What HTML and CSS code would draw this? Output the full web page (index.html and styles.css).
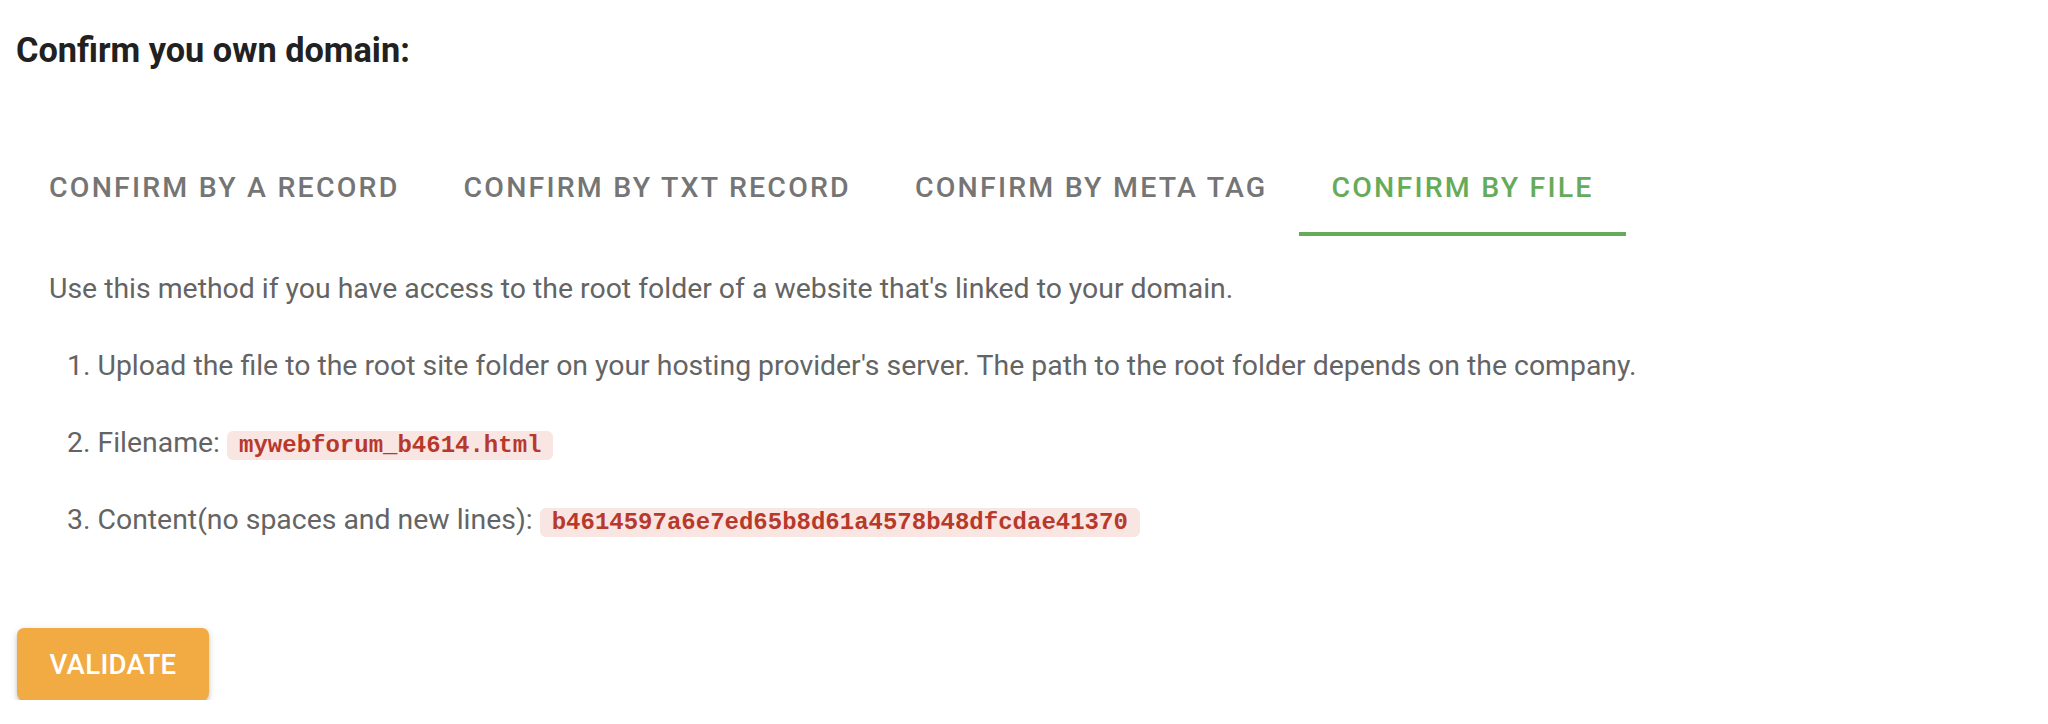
FILE: index.html
```html
<!DOCTYPE html>
<html lang="en">
<head>
<meta charset="utf-8">
<title>Confirm domain</title>
<link rel="stylesheet" href="styles.css">
</head>
<body>
<div class="page">
  <h2 class="title">Confirm you own domain:</h2>
  <div class="tabs">
    <div class="tab">Confirm by A record</div>
    <div class="tab">Confirm by TXT record</div>
    <div class="tab">Confirm by meta tag</div>
    <div class="tab active">Confirm by file</div>
  </div>
  <div class="panel">
    <p class="intro">Use this method if you have access to the root folder of a website that's linked to your domain.</p>
    <ol class="steps">
      <li>Upload the file to the root site folder on your hosting provider's server. The path to the root folder depends on the company.</li>
      <li>Filename: <code class="chip">mywebforum_b4614.html</code></li>
      <li>Content(no spaces and new lines): <code class="chip">b4614597a6e7ed65b8d61a4578b48dfcdae41370</code></li>
    </ol>
  </div>
  <button class="validate">Validate</button>
</div>
</body>
</html>
```

FILE: styles.css
```css
html, body {
  margin: 0;
  padding: 0;
  background: #ffffff;
}

body {
  font-family: Roboto, "Liberation Sans", sans-serif;
}

.page {
  padding: 29px 16px 0 16px;
  display: flex;
  flex-direction: column;
  align-items: flex-start;
}

.title {
  margin: 0;
  font-size: 34.3px;
  line-height: 42px;
  font-weight: 700;
  color: #212121;
}

.tabs {
  display: flex;
  margin-top: 68px;
  margin-left: 1px;
}

.tab {
  height: 89px;
  padding: 4px 32px 0 32px;
  border-bottom: 4px solid transparent;
  display: flex;
  align-items: center;
  font-size: 28.5px;
  font-weight: 500;
  letter-spacing: 2.2px;
  text-transform: uppercase;
  color: #757575;
  white-space: nowrap;
}

.tab.active {
  color: #66ab59;
  border-bottom-color: #66ab59;
}

.panel {
  padding-left: 33px;
  color: #646464;
  font-size: 28.4px;
  line-height: 39px;
}

.intro {
  margin: 33px 0 0 0;
}

.steps {
  margin: 38px 0 0 0;
  padding: 0 0 0 18px;
  list-style-position: inside;
  display: flex;
  flex-direction: column;
  gap: 38px;
}

.steps li {
  height: 39px;
}

.chip {
  font-family: "Liberation Mono", "Courier New", monospace;
  font-weight: 700;
  font-size: 24px;
  line-height: 24px;
  color: #b8392b;
  background: #f9e5e2;
  border-radius: 6px;
  padding: 1px 12px;
}

.validate {
  margin-top: 89px;
  margin-left: 1px;
  width: 192px;
  height: 72px;
  border: none;
  border-radius: 7px;
  background: #f2ab42;
  color: #ffffff;
  font-family: Roboto, "Liberation Sans", sans-serif;
  font-size: 27.6px;
  font-weight: 500;
  letter-spacing: 0.3px;
  text-transform: uppercase;
  box-shadow: 0 4px 3px -2px rgba(0,0,0,0.2), 0 3px 4px 0 rgba(0,0,0,0.14), 0 2px 8px 0 rgba(0,0,0,0.12);
}
```
